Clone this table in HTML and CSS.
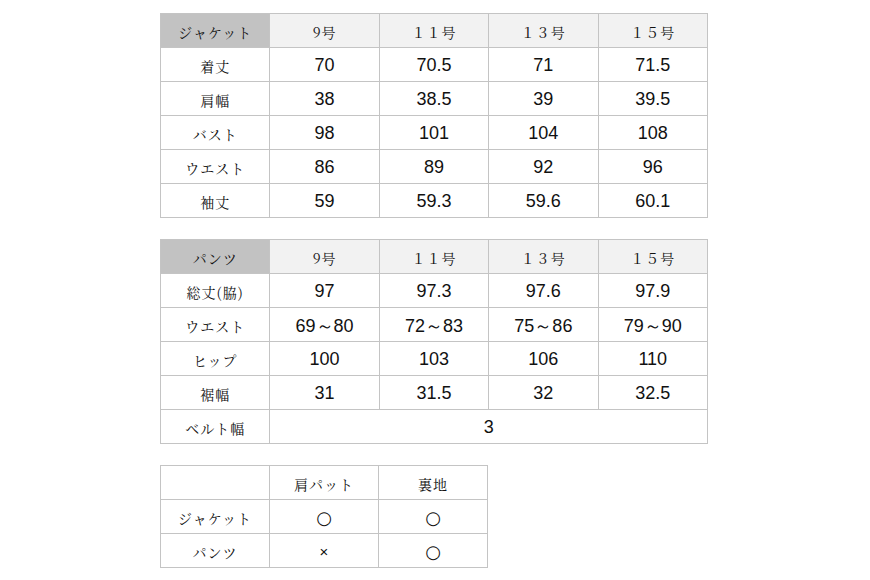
FILE: index.html
```html
<!DOCTYPE html>
<html lang="ja">
<head>
<meta charset="utf-8">
<title>サイズ表</title>
<link rel="stylesheet" href="styles.css">
</head>
<body>
<main class="page">
  <table class="size">
    <tr class="head">
      <th class="corner">ジャケット</th>
      <th>9号</th><th>１１号</th><th>１３号</th><th>１５号</th>
    </tr>
    <tr><th>着丈</th><td>70</td><td>70.5</td><td>71</td><td>71.5</td></tr>
    <tr><th>肩幅</th><td>38</td><td>38.5</td><td>39</td><td>39.5</td></tr>
    <tr><th>バスト</th><td>98</td><td>101</td><td>104</td><td>108</td></tr>
    <tr><th>ウエスト</th><td>86</td><td>89</td><td>92</td><td>96</td></tr>
    <tr><th>袖丈</th><td>59</td><td>59.3</td><td>59.6</td><td>60.1</td></tr>
  </table>

  <table class="size">
    <tr class="head">
      <th class="corner">パンツ</th>
      <th>9号</th><th>１１号</th><th>１３号</th><th>１５号</th>
    </tr>
    <tr><th>総丈(脇)</th><td>97</td><td>97.3</td><td>97.6</td><td>97.9</td></tr>
    <tr><th>ウエスト</th><td>69～80</td><td>72～83</td><td>75～86</td><td>79～90</td></tr>
    <tr><th>ヒップ</th><td>100</td><td>103</td><td>106</td><td>110</td></tr>
    <tr><th>裾幅</th><td>31</td><td>31.5</td><td>32</td><td>32.5</td></tr>
    <tr><th>ベルト幅</th><td colspan="4">3</td></tr>
  </table>

  <table class="size small">
    <tr class="plain">
      <th></th><th>肩パット</th><th>裏地</th>
    </tr>
    <tr><th>ジャケット</th><td class="mark">○</td><td class="mark">○</td></tr>
    <tr><th>パンツ</th><td class="cross">×</td><td class="mark">○</td></tr>
  </table>
</main>
</body>
</html>
```

FILE: styles.css
```css
html, body {
  margin: 0;
  padding: 0;
  background: #ffffff;
}

.page {
  display: flex;
  flex-direction: column;
  align-items: flex-start;
  gap: 21px;
  padding: 13px 0 0 160px;
}

.size {
  border-collapse: collapse;
  border: 1px solid #9e9e9e;
  table-layout: fixed;
  width: 548px;
}

.size.small {
  width: 328px;
}

.size th,
.size td {
  border: 1px solid #c4c4c4;
  height: 34px;
  padding: 2px 0 0 0;
  text-align: center;
  vertical-align: middle;
  box-sizing: border-box;
}

.size th {
  font-family: "Noto Serif CJK JP", "IPAMincho", "IPAexMincho", "Noto Sans CJK JP", serif;
  font-weight: normal;
  font-size: 14px;
  letter-spacing: 1px;
  color: #111111;
}

.size td {
  font-family: "Liberation Sans", Arial, sans-serif;
  font-size: 18px;
  color: #111111;
}

.head th {
  background: #f2f2f2;
}

.head th.corner {
  background: #c2c2c2;
}

.plain th {
  background: #ffffff;
}

.size td.mark {
  font-family: "DejaVu Sans", sans-serif;
  font-size: 18px;
}

.size td.cross {
  font-family: "Liberation Sans", Arial, sans-serif;
  font-size: 15px;
}
```
